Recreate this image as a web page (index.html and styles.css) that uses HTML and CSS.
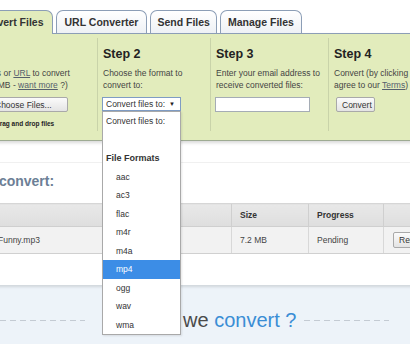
FILE: index.html
```html
<!DOCTYPE html>
<html lang="en">
<head>
  <meta charset="utf-8" />
  <title>Convert Files</title>
  <link rel="stylesheet" href="styles.css">
</head>
<body>
  <div class="page">
    <div class="tabs">
      <div class="tab tab-convert active">Convert Files</div>
      <div class="tab tab-url">URL Converter</div>
      <div class="tab tab-send">Send Files</div>
      <div class="tab tab-manage">Manage Files</div>
    </div>

    <div class="panel">
      <div class="step step1">
        <h2>Step 1</h2>
        <p>Select files or <a href="#">URL</a> to convert<br>(max. 100MB - <a href="#">want more</a> ?)</p>
        <button class="btn choose">Choose Files...</button>
        <div class="drop">Drag and drop files</div>
      </div>
      <div class="step step2">
        <h2>Step 2</h2>
        <p>Choose the format to<br>convert to:</p>
        <div class="select-wrap">
          <div class="select">Convert files to: <span class="arrow">&#9660;</span></div>
          <ul class="options">
            <li class="plain">Convert files to:</li>
            <li class="plain"></li>
            <li class="group">File Formats</li>
            <li>aac</li>
            <li>ac3</li>
            <li>flac</li>
            <li>m4r</li>
            <li>m4a</li>
            <li class="selected">mp4</li>
            <li>ogg</li>
            <li>wav</li>
            <li>wma</li>
          </ul>
        </div>
      </div>
      <div class="step step3">
        <h2>Step 3</h2>
        <p>Enter your email address to<br>receive converted files:</p>
        <input class="email" type="text">
      </div>
      <div class="step step4">
        <h2>Step 4</h2>
        <p>Convert (by clicking you<br>agree to our <a href="#">Terms</a>)</p>
        <button class="btn convert">Convert</button>
      </div>
    </div>

    <div class="files">
      <h3>Files to convert:</h3>
      <table class="file-table">
        <tr>
          <th class="c-name"></th>
          <th class="c-size">Size</th>
          <th class="c-progress">Progress</th>
          <th class="c-action"></th>
        </tr>
        <tr>
          <td class="c-name">Really Funny.mp3</td>
          <td class="c-size">7.2 MB</td>
          <td class="c-progress">Pending</td>
          <td class="c-action"><button class="btn remove">Remove</button></td>
        </tr>
      </table>
    </div>

    <div class="about">
      <div class="about-title">
        <span class="dash"></span>
        <h2>What do we <span class="blue">convert ?</span></h2>
        <span class="dash"></span>
      </div>
    </div>
  </div>
</body>
</html>
```

FILE: styles.css
```css
body {
  margin: 0;
  padding: 0;
  width: 410px;
  height: 344px;
  overflow: hidden;
  background-color: #fff;
  font-family: "Liberation Sans", Arial, sans-serif;
  color: #444;
}
.page {
  margin-left: -40px;
  width: 460px;
}

/* tabs */
.tabs {
  display: flex;
  gap: 3px;
  padding-top: 10px;
  padding-left: 8px;
  position: relative;
  z-index: 2;
}
.tab {
  height: 22px;
  line-height: 23px;
  padding: 0 8px;
  border: 1px solid #8c9eb6;
  border-bottom: none;
  border-radius: 7px 7px 0 0;
  background: linear-gradient(#ffffff, #eef1f5);
  font-size: 10.5px;
  font-weight: bold;
  color: #333;
}
.tab.active {
  height: 23px;
  margin-bottom: -1px;
  background: #e2ecbc;
}
.tab-send {
  padding: 0 6px;
}
.tab-manage {
  padding: 0 7px;
}

/* steps panel */
.panel {
  display: flex;
  background-color: #e2ecbc;
  border-top: 1px solid #8c9eb6;
  border-bottom: 1px solid #9eab93;
  box-shadow: 0 2px 3px rgba(0, 0, 0, 0.15);
  padding: 4px 0 9px;
  position: relative;
  z-index: 1;
}
.step {
  flex-shrink: 0;
  padding: 8px 5px 2px;
  border-left: 1px solid #c9d3a9;
  font-size: 8.5px;
  line-height: 12px;
}
.step1 {
  width: 132px;
  padding-left: 0;
  border-left: none;
}
.step2 {
  width: 102px;
}
.step3 {
  width: 107px;
}
.step4 {
  flex: 1 1 auto;
  min-width: 0;
  white-space: nowrap;
}
.step h2 {
  margin: 0;
  font-size: 12.5px;
  line-height: 16px;
  color: #222;
}
.step p {
  margin: 5px 0 6px;
  color: #444;
}
.step a {
  color: #55606d;
}
.btn {
  display: block;
  height: 15px;
  padding: 0 5px;
  border: 1px solid #a9a9a9;
  border-radius: 2px;
  background: linear-gradient(#fbfbfb, #e4e4e4);
  font-family: "Liberation Sans", Arial, sans-serif;
  font-size: 8.5px;
  color: #333;
  text-align: left;
}
.choose {
  width: 80px;
  margin-left: 28px;
  padding-left: 6px;
}
.drop {
  margin: 7px 0 0 35px;
  font-size: 6.5px;
  line-height: 10px;
  font-weight: bold;
  color: #222;
}
.convert {
  margin-left: 2px;
  width: 39px;
  text-align: center;
}
.email {
  display: block;
  width: 95px;
  height: 15px;
  box-sizing: border-box;
  margin: 1px 0 0 -1px;
  border: 1px solid #a5acb5;
  background: #fff;
}

/* select and its open list */
.select-wrap {
  position: relative;
  width: 79px;
  margin-left: -1px;
}
.select {
  height: 12px;
  line-height: 12px;
  border: 1px solid #7f9cc4;
  background: #fff;
  padding-left: 3px;
  font-size: 8.5px;
  color: #333;
}
.arrow {
  position: absolute;
  right: 6px;
  top: 1px;
  font-size: 6px;
  color: #222;
}
.options {
  position: absolute;
  top: 14px;
  left: 0;
  width: 77px;
  margin: 0;
  padding: 0;
  list-style: none;
  background: #fff;
  border: 1px solid #a9a9a9;
  box-shadow: 1px 1px 2px rgba(0, 0, 0, 0.1);
}
.options li {
  height: 18.5px;
  line-height: 19px;
  padding-left: 13px;
  font-size: 8.5px;
  color: #333;
}
.options li.plain {
  padding-left: 3px;
}
.options li.group {
  padding-left: 3px;
  font-weight: bold;
  font-size: 9px;
  color: #333;
}
.options li.selected {
  background-color: #3c8de6;
  color: #fff;
}

/* files table */
.files {
  margin-top: 21px;
  border-top: 1px solid #f0f0f0;
}
.files h3 {
  margin: 9px 0 13px -14px;
  font-size: 14px;
  line-height: 18px;
  color: #6d7f96;
}
.file-table {
  border-collapse: collapse;
  table-layout: fixed;
  width: 450px;
  font-size: 8.5px;
  color: #444;
}
.file-table th {
  height: 22px;
  text-align: left;
  padding: 0 8px;
  background: linear-gradient(#e8e8e8, #dedede);
  border-top: 1px solid #d6d6d6;
  border-bottom: 1px solid #cfcfcf;
  border-left: 1px solid #cfcfcf;
  color: #333;
  font-size: 8.5px;
}
.file-table td {
  height: 26px;
  padding: 0 8px;
  background: #f2f2f2;
  border-bottom: 1px solid #d0d0d0;
  border-left: 1px solid #d8d8d8;
  white-space: nowrap;
  overflow: hidden;
}
.file-table .c-name {
  width: 251px;
  padding-left: 12px;
  border-left: none;
}
.file-table .c-size {
  width: 60px;
}
.file-table .c-progress {
  width: 58px;
}
.file-table .c-action {
  padding-left: 9px;
}
.remove {
  height: 16px;
  padding: 0 5px;
}

/* about block */
.about {
  margin-top: 31px;
  height: 70px;
  background-color: #edf3f9;
  box-shadow: inset 0 2px 3px rgba(0, 0, 0, 0.12);
  padding-top: 23px;
  box-sizing: border-box;
}
.about-title {
  display: flex;
  align-items: center;
  gap: 8px;
  padding-left: 40px;
}
.dash {
  width: 85px;
  height: 1px;
  background: repeating-linear-gradient(90deg, #c4cbd3 0 6px, transparent 6px 10px);
}
.about h2 {
  margin: 0 0 0 10px;
  font-size: 20px;
  line-height: 24px;
  font-weight: normal;
  color: #4a4a4a;
  white-space: nowrap;
}
.about .blue {
  color: #3a8dd5;
}
```
